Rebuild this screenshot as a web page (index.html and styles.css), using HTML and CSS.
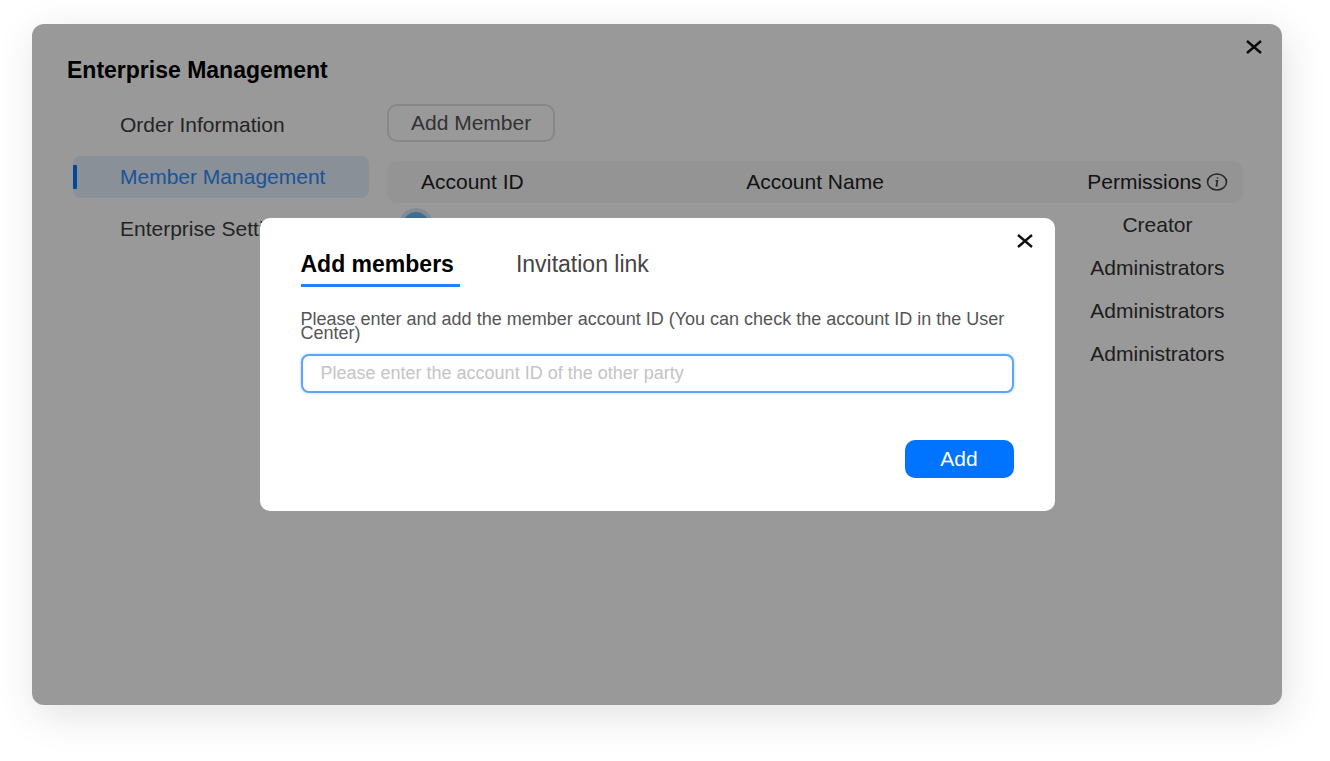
FILE: index.html
```html
<!DOCTYPE html>
<html lang="en">
<head>
<meta charset="utf-8">
<title>Enterprise Management</title>
<link rel="stylesheet" href="styles.css">
</head>
<body>
<main class="panel">
  <header class="panel-head">
    <h1 class="panel-title">Enterprise Management</h1>
    <button class="close" type="button" aria-label="Close panel">
      <svg viewBox="0 0 20 20" aria-hidden="true"><path d="M3 4 17 16M17 4 3 16"/></svg>
    </button>
  </header>
  <div class="panel-body">
    <nav class="side">
      <a class="side-link" href="#order">Order Information</a>
      <a class="side-link active" href="#members">Member Management</a>
      <a class="side-link" href="#settings">Enterprise Settings</a>
    </nav>
    <section class="content">
      <button class="btn-outline" type="button">Add Member</button>
      <table class="members">
        <thead>
          <tr>
            <th class="col-id" scope="col">Account ID</th>
            <th class="col-name" scope="col">Account Name</th>
            <th class="col-perm" scope="col">
              <span class="perm-head">Permissions
                <svg class="info" viewBox="0 0 22 20" aria-hidden="true">
                  <ellipse cx="11" cy="10" rx="9.5" ry="8"/>
                  <path d="M9.6 8.8h1.8l-1 4.8h1.4M11.6 5.4l-.2 1.2"/>
                </svg>
              </span>
            </th>
          </tr>
        </thead>
        <tbody>
          <tr><td><span class="avatar"></span></td><td></td><td>Creator</td></tr>
          <tr><td></td><td></td><td>Administrators</td></tr>
          <tr><td></td><td></td><td>Administrators</td></tr>
          <tr><td></td><td></td><td>Administrators</td></tr>
        </tbody>
      </table>
    </section>
  </div>
  <div class="overlay">
    <form class="dialog" role="dialog" aria-label="Add members">
      <div class="dialog-head">
        <div class="tabs" role="tablist">
          <button class="tab selected" type="button" role="tab" aria-selected="true">Add members</button>
          <button class="tab" type="button" role="tab" aria-selected="false">Invitation link</button>
        </div>
        <button class="close" type="button" aria-label="Close dialog">
          <svg viewBox="0 0 20 20" aria-hidden="true"><path d="M3 4 17 16M17 4 3 16"/></svg>
        </button>
      </div>
      <div class="dialog-body">
        <label class="hint" for="account">Please enter and add the member account ID (You can check the account ID in the User Center)</label>
        <input class="field" id="account" type="text" placeholder="Please enter the account ID of the other party">
        <button class="btn-primary" type="submit">Add</button>
      </div>
    </form>
  </div>
</main>
</body>
</html>
```
FILE: styles.css
```css
* { box-sizing: border-box; }

body {
  margin: 0;
  padding: 24px 48px 56px 32px;
  background: #fff;
  color: #333;
  font: 21px/24px "Liberation Sans", Arial, sans-serif;
}

button, input { font: inherit; color: inherit; }
button { cursor: pointer; }

.panel {
  position: relative;
  min-height: calc(100vh - 80px);
  border-radius: 12px;
  background: #fff;
  box-shadow: 4px 10px 40px rgba(0, 0, 0, 0.12);
}

.panel-head {
  display: flex;
  justify-content: space-between;
  align-items: flex-start;
  height: 80px;
  padding: 13px 18px 0 35px;
}

.panel-title {
  margin: 20px 0 0;
  color: #000;
  font-size: 23px;
  line-height: 26px;
}

.close {
  width: 20px;
  height: 20px;
  padding: 0;
  border: 0;
  background: none;
}

.close svg {
  display: block;
  fill: none;
  stroke: #111;
  stroke-width: 2.4;
}

.panel-body {
  display: flex;
  gap: 18px;
  padding: 0 39px 0 41px;
}

.side {
  display: flex;
  flex-direction: column;
  gap: 10px;
  width: 296px;
}

.side-link {
  display: flex;
  align-items: center;
  height: 42px;
  padding-left: 47px;
  border-radius: 8px;
  color: #3c3c3c;
  text-decoration: none;
}

.side-link.active {
  position: relative;
  background: #e5f1fc;
  color: #2f8aff;
}

.side-link.active::before {
  content: "";
  position: absolute;
  left: 0;
  width: 4px;
  height: 24px;
  border-radius: 1px;
  background: #0078ff;
}

.content { flex: 1; }

.btn-outline {
  display: block;
  height: 38px;
  padding: 0 22px;
  border: 2px solid #e2e2e2;
  border-radius: 10px;
  background: none;
  color: #555;
}

.members {
  width: 100%;
  margin-top: 19px;
  table-layout: fixed;
  border-spacing: 0;
  text-align: center;
}

.members th {
  height: 42px;
  padding: 0;
  background: #f7f7f7;
  color: #222;
  font-weight: normal;
}

.members td { height: 43px; padding: 0; }

.members .col-id {
  width: 20%;
  padding-left: 34px;
  border-radius: 10px 0 0 10px;
  text-align: left;
}

.members .col-perm {
  width: 20%;
  border-radius: 0 10px 10px 0;
}

.perm-head {
  display: flex;
  justify-content: center;
  align-items: center;
  gap: 4px;
}

.info {
  width: 22px;
  fill: none;
  stroke: #444;
  stroke-width: 1.6;
}

.avatar {
  display: block;
  width: 34px;
  height: 34px;
  margin-left: 12px;
  border: 4px solid #dbe8f3;
  border-radius: 50%;
  background: #68b5f5;
}

.overlay {
  position: absolute;
  inset: 0;
  display: flex;
  justify-content: center;
  align-items: center;
  border-radius: 12px;
  background: rgba(0, 0, 0, 0.4);
}

.dialog {
  width: 63.6%;
  border-radius: 10px;
  background: #fff;
}

.dialog-head {
  display: flex;
  justify-content: space-between;
  align-items: flex-start;
  padding: 13px 20px 0 41px;
}

.tabs {
  display: flex;
  gap: 56px;
  padding-top: 18px;
}

.tab {
  padding: 0 6px 5px 0;
  border: 0;
  border-bottom: 3px solid transparent;
  background: none;
  color: #444;
  font-size: 23px;
  line-height: 30px;
}

.tab.selected {
  border-color: #1e82ff;
  color: #000;
  font-weight: bold;
}

.dialog-body {
  display: flex;
  flex-direction: column;
  padding: 25px 41px 33px;
}

.hint {
  color: #555;
  font-size: 18px;
  line-height: 14px;
}

.field {
  height: 39px;
  margin-top: 14px;
  padding: 0 18px;
  border: 2px solid #5aa5ff;
  border-radius: 8px;
  outline: 0;
  box-shadow: 0 0 3px #a9d0ff;
  font-size: 18px;
}

.field::placeholder { color: #c4c4c4; }

.btn-primary {
  align-self: flex-end;
  width: 109px;
  height: 38px;
  margin-top: 47px;
  border: 0;
  border-radius: 10px;
  background: #0073ff;
  color: #fff;
}
```
